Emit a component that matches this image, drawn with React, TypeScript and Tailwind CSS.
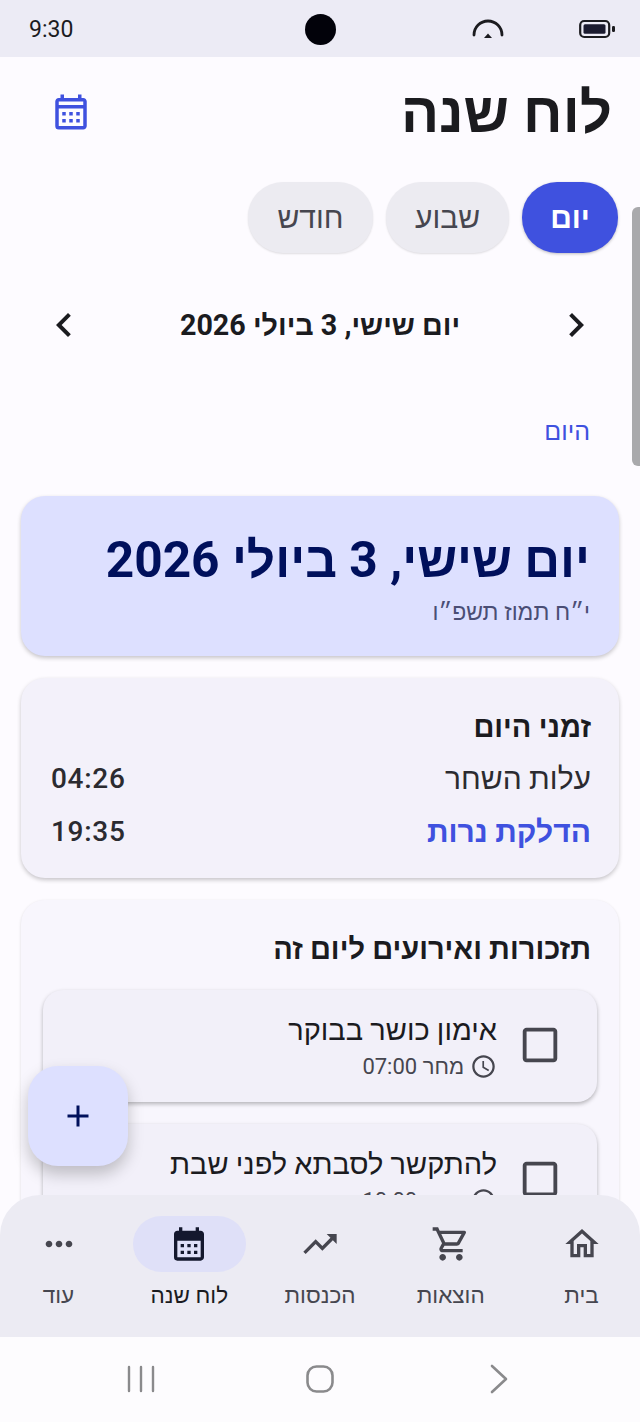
import {
  MdAdd,
  MdAccessTime,
  MdCalendarMonth,
  MdChevronLeft,
  MdChevronRight,
  MdMoreHoriz,
  MdOutlineCalendarMonth,
  MdOutlineCheckBoxOutlineBlank,
  MdOutlineHome,
  MdOutlineShoppingCart,
  MdTrendingUp,
} from "react-icons/md";

const font = "font-['Roboto','Noto_Sans','Liberation_Sans',sans-serif]";

const navItems = [
  { label: "בית", icon: MdOutlineHome },
  { label: "הוצאות", icon: MdOutlineShoppingCart },
  { label: "הכנסות", icon: MdTrendingUp },
  { label: "לוח שנה", icon: MdCalendarMonth, active: true },
  { label: "עוד", icon: MdMoreHoriz },
];

const Reminder = ({ title, time }: { title: string; time: string }) => (
  <div className="flex h-[112px] items-center gap-[20px] rounded-[20px] bg-[#F2F0F9] pb-[2px] pr-[34px] shadow-[0_2px_4px_rgba(0,0,0,0.28)]">
    <MdOutlineCheckBoxOutlineBlank className="size-[46px] shrink-0 text-[#46464F]" />
    <div className="flex flex-col">
      <span className="text-[29px] leading-[40px] text-[#1B1B1F]">{title}</span>
      <span className="mt-[3px] flex items-center gap-[6px] text-[22px] leading-[28px] text-[#46464F]">
        <MdAccessTime className="size-[27px]" />
        {time}
      </span>
    </div>
  </div>
);

const App = () => {
  return (
    <div
      className={`${font} relative flex h-[1422px] w-[640px] flex-col overflow-hidden bg-[#FDFBFF]`}
    >
      {/* status bar */}
      <div className="relative flex h-[57px] shrink-0 items-center justify-between bg-[#ECEBF5] pl-[29px] pr-[24px]">
        <span className="pt-[4px] text-[23px] text-[#1B1B1F]">9:30</span>
        <div className="absolute left-[305px] top-[14px] h-[31px] w-[31px] rounded-full bg-[#02020A]" />
        <div className="flex items-center gap-[75px]">
          <svg width="32" height="22" viewBox="0 0 32 22" fill="none">
            <path
              d="M2 17 A14 14 0 0 1 30 17"
              stroke="#1B1B1F"
              strokeWidth="2.8"
              strokeLinecap="round"
            />
            <path d="M12 20 L16 15.5 L20 20 Z" fill="#1B1B1F" />
          </svg>
          <svg width="37" height="20" viewBox="0 0 37 20" fill="none">
            <rect x="1.2" y="2" width="29" height="16" rx="4" stroke="#1B1B1F" strokeWidth="2.2" />
            <rect x="4.5" y="5.2" width="22" height="9.6" rx="1.5" fill="#1B1B2F" />
            <rect x="33" y="7" width="3" height="6" rx="1.2" fill="#1B1B1F" />
          </svg>
        </div>
      </div>

      {/* content */}
      <div dir="rtl" className="relative z-0 -mb-[28px] min-h-0 flex-1 overflow-hidden">
        <div className="flex items-center justify-between pl-[50px] pr-[28px] pt-[20px]">
          <h1 className="text-[56.5px] font-bold leading-[72px] text-[#1B1B1F]">לוח שנה</h1>
          <MdOutlineCalendarMonth className="mb-[3px] size-[42px] text-[#3F51DF]" />
        </div>

        <div className="mt-[33px] flex gap-[13px] pr-[22px]">
          <div className="flex h-[71px] w-[96px] items-center justify-center rounded-[35px] bg-[#3F51DF] text-[30px] font-bold text-white shadow-[0_1px_3px_rgba(0,0,0,0.25)]">
            יום
          </div>
          <div className="flex h-[71px] w-[123px] items-center justify-center rounded-[35px] bg-[#ECEBF1] text-[30px] text-[#46464F] shadow-[0_1px_2px_rgba(0,0,0,0.12)]">
            שבוע
          </div>
          <div className="flex h-[71px] w-[125px] items-center justify-center rounded-[35px] bg-[#ECEBF1] text-[30px] text-[#46464F] shadow-[0_1px_2px_rgba(0,0,0,0.12)]">
            חודש
          </div>
        </div>

        <div className="mt-[48px] flex h-[48px] items-center justify-between pl-[40px] pr-[40px]">
          <MdChevronRight className="size-[48px] text-[#1B1B1F]" />
          <span className="pt-[2px] text-[28.7px] font-bold text-[#1B1B1F]">יום שישי, 3 ביולי 2026</span>
          <MdChevronLeft className="size-[48px] text-[#1B1B1F]" />
        </div>

        <div className="mt-[67px] pr-[50px] text-[25px] leading-[32px] text-[#3F51DF]">היום</div>

        <div className="mx-[21px] mt-[48px] flex h-[160px] flex-col rounded-[24px] bg-[#DDE0FF] pr-[29px] pt-[31px] shadow-[0_2px_4px_rgba(0,0,0,0.22)]">
          <span className="text-[49.6px] font-bold leading-[66px] text-[#00105C]">
            יום שישי, 3 ביולי 2026
          </span>
          <span className="mt-[5px] text-[23px] leading-[30px] text-[#4A4E75]">י״ח תמוז תשפ״ו</span>
        </div>

        <div className="mx-[21px] mt-[22px] flex h-[200px] flex-col rounded-[24px] bg-[#F3F1FA] px-[28px] pt-[30px] shadow-[0_2px_4px_rgba(0,0,0,0.22)]">
          <span className="text-[29px] font-bold leading-[38px] text-[#1B1B1F]">זמני היום</span>
          <div className="mt-[13px] flex items-center justify-between text-[30px] leading-[40px] text-[#2B2B30]">
            <span>עלות השחר</span>
            <span className="pl-[2px] text-[28px] font-medium tracking-[0.7px]">04:26</span>
          </div>
          <div className="mt-[13px] flex items-center justify-between text-[30px] leading-[40px]">
            <span className="font-bold text-[#3F51DF]">הדלקת נרות</span>
            <span className="pl-[2px] text-[28px] font-medium tracking-[0.7px] text-[#2B2B30]">19:35</span>
          </div>
        </div>

        <div className="mx-[21px] mt-[22px] flex h-[400px] flex-col rounded-[24px] bg-[#F8F6FD] px-[22px] pt-[30px] shadow-[0_1px_3px_rgba(0,0,0,0.14)]">
          <span className="pr-[6px] text-[29px] font-bold leading-[38px] text-[#1B1B1F]">
            תזכורות ואירועים ליום זה
          </span>
          <div className="mt-[22px] flex flex-col gap-[22px]">
            <Reminder title="אימון כושר בבוקר" time="מחר 07:00" />
            <Reminder title="להתקשר לסבתא לפני שבת" time="מחר 10:00" />
          </div>
        </div>

        {/* scrollbar */}
        <div className="absolute right-0 top-[150px] h-[259px] w-[8px] rounded-l-[6px] bg-[#A9A9AC]" />
      </div>

      {/* fab */}
      <div className="absolute left-[28px] top-[1066px] z-10 flex size-[100px] items-center justify-center rounded-[30px] bg-[#DDE0FF] shadow-[0_8px_16px_rgba(0,0,0,0.22)]">
        <MdAdd className="size-[36px] text-[#00105C]" />
      </div>

      {/* bottom nav */}
      <div
        dir="rtl"
        className="relative z-10 flex h-[142px] shrink-0 justify-between rounded-t-[40px] bg-[#ECEBF3] px-[2px] pt-[21px]"
      >
        {navItems.map((item) => {
          const Icon = item.icon;
          return (
            <div key={item.label} className="flex w-[113px] flex-col items-center">
              <div
                className={`flex h-[56px] w-[113px] items-center justify-center rounded-[28px] ${
                  item.active ? "bg-[#DFE0F8]" : ""
                }`}
              >
                <Icon className={`size-[40px] ${item.active ? "text-[#14182E]" : "text-[#46464F]"}`} />
              </div>
              <span
                className={`mt-[9px] text-[22.5px] leading-[28px] ${
                  item.active ? "text-[#1B1B1F]" : "text-[#46464F]"
                }`}
              >
                {item.label}
              </span>
            </div>
          );
        })}
      </div>

      {/* android gesture bar */}
      <div className="flex h-[85px] shrink-0 items-center bg-[#FDFCFE] text-[#8A8A8C]">
        <div className="flex w-full items-center pb-[2px] pl-[127px]">
          <svg width="28" height="28" viewBox="0 0 28 28" stroke="currentColor" strokeWidth="2.4" strokeLinecap="round">
            <path d="M2 2v24M14 2v24M26 2v24" />
          </svg>
          <svg className="ml-[151px]" width="28" height="28" viewBox="0 0 28 28" fill="none" stroke="currentColor" strokeWidth="2.6">
            <rect x="1.5" y="1.5" width="25" height="25" rx="9" />
          </svg>
          <svg className="ml-[155px]" width="20" height="30" viewBox="0 0 20 30" fill="none" stroke="currentColor" strokeWidth="2.6" strokeLinecap="round" strokeLinejoin="round">
            <path d="M3 2l14 13L3 28" />
          </svg>
        </div>
      </div>
    </div>
  );
};

export default App;
